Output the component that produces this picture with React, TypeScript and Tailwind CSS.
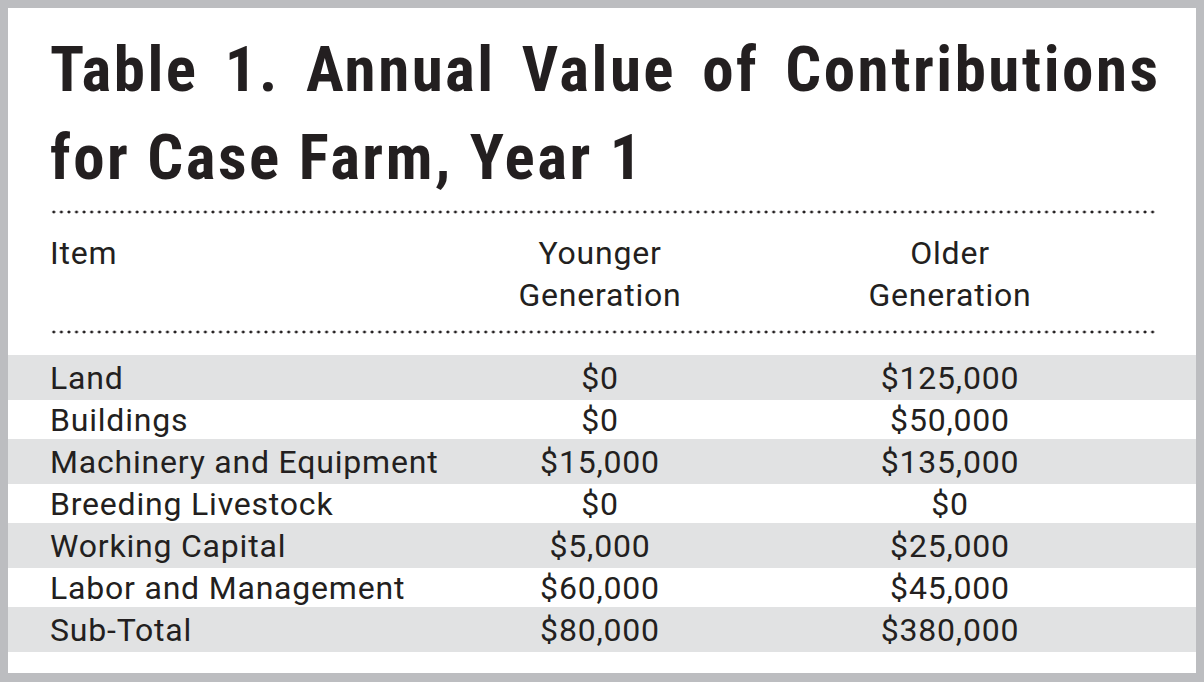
const ROWS = [
  { item: "Land", younger: "$0", older: "$125,000" },
  { item: "Buildings", younger: "$0", older: "$50,000" },
  { item: "Machinery and Equipment", younger: "$15,000", older: "$135,000" },
  { item: "Breeding Livestock", younger: "$0", older: "$0" },
  { item: "Working Capital", younger: "$5,000", older: "$25,000" },
  { item: "Labor and Management", younger: "$60,000", older: "$45,000" },
  { item: "Sub-Total", younger: "$80,000", older: "$380,000" },
];

function DottedRule() {
  return (
    <div className="h-[4px] bg-[radial-gradient(circle,#231f20_1.3px,transparent_1.7px)] bg-[length:7.6px_4px] bg-repeat-round" />
  );
}

export default function App() {
  return (
    <div className="w-[1204px] h-[682px] bg-[#bcbdc0] pt-[8px] pl-[8px] pr-[8px] pb-[9px] font-['Roboto',sans-serif] text-[#231f20]">
      <div className="h-full bg-white flex flex-col">
        <div className="pl-[42px] pr-[38px]">
          <h1 className="pt-[18px] text-[63px] leading-[88px] font-bold tracking-[2.5px] font-['Roboto_Condensed',Roboto,sans-serif]">
            <span className="block text-justify [text-align-last:justify] mr-[-2.5px]">
              Table 1. Annual Value of Contributions
            </span>
            <span className="block">for Case Farm, Year 1</span>
          </h1>
          <div className="mt-[8px]">
            <DottedRule />
          </div>
          <div className="grid grid-cols-[425px_250px_100px_250px] pt-[18px] pb-[14px] text-[32px] leading-[42px] tracking-[0.8px]">
            <div>Item</div>
            <div className="text-center">
              Younger
              <br />
              Generation
            </div>
            <div />
            <div className="text-center">
              Older
              <br />
              Generation
            </div>
          </div>
          <DottedRule />
        </div>
        <div className="mt-[21px] text-[32px] leading-[38px] tracking-[0.8px]">
          {ROWS.map((r, i) => (
            <div
              key={r.item}
              className={
                i % 2 === 0
                  ? "grid grid-cols-[425px_250px_100px_250px] pl-[42px] h-[45px] items-center bg-[#e1e2e3]"
                  : "grid grid-cols-[425px_250px_100px_250px] pl-[42px] h-[39px] items-center"
              }
            >
              <div>{r.item}</div>
              <div className="text-center">{r.younger}</div>
              <div />
              <div className="text-center">{r.older}</div>
            </div>
          ))}
        </div>
      </div>
    </div>
  );
}
